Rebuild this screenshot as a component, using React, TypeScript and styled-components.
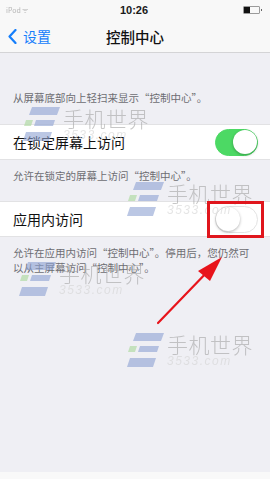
import React from 'react';
import styled, { createGlobalStyle } from 'styled-components';

const GlobalStyle = createGlobalStyle`
  html, body {
    margin: 0;
    padding: 0;
    background: #efeff4;
  }
  body {
    font-family: "Noto Sans CJK SC", "Noto Sans", "Liberation Sans", sans-serif;
  }
`;

const Page = styled.div`
  position: relative;
  width: 270px;
  height: 479px;
  overflow: hidden;
  display: flex;
  flex-direction: column;
  background: #efeff4;
`;

const StatusBar = styled.div`
  height: 20px;
  display: grid;
  grid-template-columns: 1fr auto 1fr;
  align-items: center;
  padding: 0 8px 0 6px;
  background: #f8f8f8;
`;

const Carrier = styled.span`
  font-size: 7px;
  color: #b5b5b5;
  filter: blur(0.4px);
`;

const Clock = styled.span`
  font-family: "Liberation Sans", "Noto Sans", sans-serif;
  font-size: 11px;
  font-weight: 700;
  color: #1a1a1a;
`;

const Battery = styled.div`
  justify-self: end;
  position: relative;
  width: 15px;
  height: 6px;
  border: 1px solid #9a9a9a;
  border-radius: 1px;
  margin-right: 2px;

  &::before {
    content: '';
    position: absolute;
    left: 0;
    top: 0;
    bottom: 0;
    width: 6px;
    background: #111;
  }
  &::after {
    content: '';
    position: absolute;
    right: -3px;
    top: 2px;
    width: 1.5px;
    height: 2px;
    background: #666;
  }
`;

const NavBar = styled.div`
  height: 32px;
  display: grid;
  grid-template-columns: 1fr auto 1fr;
  align-items: center;
  padding: 0 8px;
  background: #f8f8f8;
  border-bottom: 1px solid #d4d4d6;
`;

const Back = styled.div`
  display: flex;
  align-items: center;
  gap: 6px;
  color: #157efb;
  font-size: 14px;
`;

const Title = styled.div`
  font-size: 14.5px;
  font-weight: 500;
  color: #111;
`;

const Caption = styled.div<{ $top?: number; $bottom?: number }>`
  padding: ${p => p.$top ?? 8}px 13px ${p => p.$bottom ?? 0}px 13px;
  font-size: 10.5px;
  line-height: 15px;
  color: #6d6d72;
`;

const Row = styled.div<{ $top: number }>`
  margin-top: ${p => p.$top}px;
  height: 36px;
  box-sizing: border-box;
  display: flex;
  align-items: center;
  justify-content: space-between;
  padding: 0 12px 0 13px;
  background: #fff;
  border-top: 1px solid #e2e2e4;
  border-bottom: 1px solid #e2e2e4;
`;

const Label = styled.span`
  font-size: 14px;
  color: #111;
`;

const Switch = styled.div<{ $on: boolean }>`
  position: relative;
  width: 43px;
  height: 27px;
  box-sizing: border-box;
  border-radius: 14px;
  background: ${p => (p.$on ? '#4cd964' : '#fff')};
  border: 1.5px solid ${p => (p.$on ? '#4cd964' : '#e3e3e3')};

  &::after {
    content: '';
    position: absolute;
    top: 0;
    ${p => (p.$on ? 'right: 0;' : 'left: 0;')}
    width: 24px;
    height: 24px;
    border-radius: 50%;
    background: #fff;
    box-shadow: 0 1px 3px rgba(0, 0, 0, 0.3);
  }
`;

const Filler = styled.div`
  flex: 1;
`;

const BottomStrip = styled.div`
  height: 7px;
  background: #f9f9f9;
`;

const Highlight = styled.div`
  position: absolute;
  left: 207px;
  top: 201px;
  width: 57px;
  height: 37px;
  box-sizing: border-box;
  border: 3px solid #e0161d;
`;

const Mark = styled.div<{ $x: number; $y: number }>`
  position: absolute;
  left: ${p => p.$x}px;
  top: ${p => p.$y}px;
  display: flex;
  align-items: flex-start;
  gap: 3px;
  opacity: 0.6;
  pointer-events: none;
`;

const MarkText = styled.div`
  display: flex;
  flex-direction: column;
  margin-top: 1px;
`;

const MarkName = styled.span`
  font-size: 21px;
  line-height: 20px;
  font-weight: 300;
  color: #a3a3a3;
  letter-spacing: 0.5px;
`;

const MarkSite = styled.span`
  font-family: "Liberation Sans", sans-serif;
  font-style: italic;
  font-size: 12px;
  line-height: 13px;
  color: #d4d4d4;
  letter-spacing: 1.5px;
  margin-top: 1px;
`;

const ArrowLayer = styled.svg`
  position: absolute;
  left: 0;
  top: 0;
  pointer-events: none;
`;

const MarkLogo = () => (
  <svg width="38" height="35" viewBox="0 0 38 35">
    <polygon points="10,0 38,0 35,8 7,8" fill="#8ea2d3" />
    <polygon points="4,13 11,13 9,19 2,19" fill="#a9d89a" />
    <polygon points="14,13 33,13 31,19 12,19" fill="#8ea2d3" />
    <polygon points="4,25 30,25 27,34 1,34" fill="#8ea2d3" />
  </svg>
);

const Watermark = ({ x, y }: { x: number; y: number }) => (
  <Mark $x={x} $y={y}>
    <MarkLogo />
    <MarkText>
      <MarkName>手机世界</MarkName>
      <MarkSite>3533.com</MarkSite>
    </MarkText>
  </Mark>
);

const App: React.FC = () => {
  return (
    <Page>
      <GlobalStyle />
      <StatusBar>
        <Carrier>iPod ᯤ</Carrier>
        <Clock>10:26</Clock>
        <Battery />
      </StatusBar>

      <NavBar>
        <Back>
          <svg width="9" height="15" viewBox="0 0 9 15">
            <path d="M7.5 1 L1.5 7.5 L7.5 14" fill="none" stroke="#157efb" strokeWidth="2.2" strokeLinecap="round" strokeLinejoin="round" />
          </svg>
          设置
        </Back>
        <Title>控制中心</Title>
        <span />
      </NavBar>

      <Caption $top={37} $bottom={0}>从屏幕底部向上轻扫来显示“控制中心”。</Caption>
      <Row $top={19}>
        <Label>在锁定屏幕上访问</Label>
        <Switch $on />
      </Row>
      <Caption>允许在锁定的屏幕上访问“控制中心”。</Caption>
      <Row $top={18}>
        <Label>应用内访问</Label>
        <Switch $on={false} />
      </Row>
      <Caption>允许在应用内访问“控制中心”。停用后，您仍然可以从主屏幕访问“控制中心”。</Caption>
      <Filler />
      <BottomStrip />

      <Watermark x={22} y={107} />
      <Watermark x={126} y={182} />
      <Watermark x={18} y={262} />
      <Watermark x={126} y={333} />

      <Highlight />

      <ArrowLayer width="270" height="479" viewBox="0 0 270 479">
        <line x1="158" y1="323" x2="211" y2="268" stroke="#e8141b" strokeWidth="2.2" strokeLinecap="round" />
        <polygon points="222,257 198,271 210,281" fill="#e8141b" />
      </ArrowLayer>
    </Page>
  );
};

export default App;
